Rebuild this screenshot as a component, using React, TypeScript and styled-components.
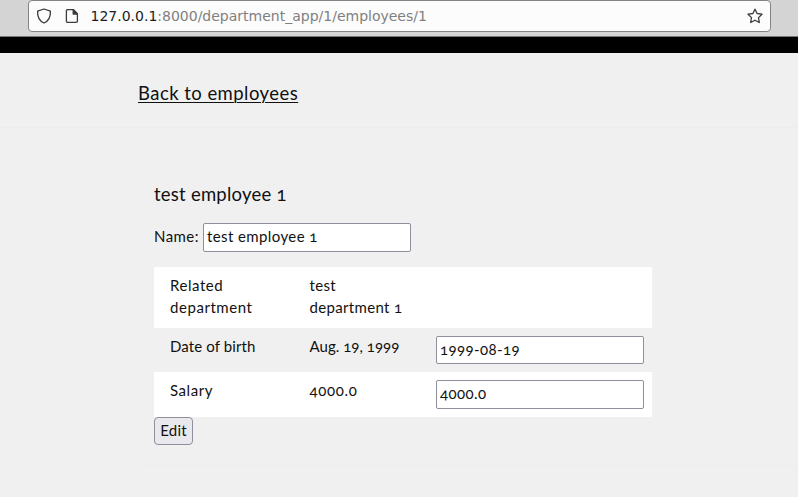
import React from "react";
import styled, { createGlobalStyle } from "styled-components";

const GlobalStyle = createGlobalStyle`
  * { box-sizing: border-box; }
  body {
    margin: 0;
    background: #f0f0f0;
    color: #111;
    font: 15px/22px Lato, "Open Sans", sans-serif;
    font-feature-settings: "onum" 1;
    overflow: hidden;
  }
`;

const Page = styled.div`
  height: 497px;
  overflow: hidden;
`;

const Toolbar = styled.header`
  height: 37px;
  background: #d4d4d4;
  border-bottom: 1px solid #777;
  padding: 0 27px 0 28px;
`;

const AddressBar = styled.div`
  height: 32px;
  display: flex;
  align-items: center;
  padding: 0 7px;
  background: #fcfcfc;
  border: 1px solid #838383;
  border-radius: 4px;
  font: 14px/20px "DejaVu Sans", sans-serif;
  color: #808080;
`;

const Icon = styled.svg<{ $gap?: number }>`
  width: 16px;
  height: 16px;
  flex: none;
  margin-right: ${(p) => p.$gap ?? 0}px;
  fill: none;
  stroke: #3c3c3c;
  stroke-width: 1.3;
  stroke-linejoin: round;
`;

const Url = styled.span`
  flex: 1;
  b { font-weight: 400; color: #1c1c1c; }
`;

const Banner = styled.div`
  height: 16px;
  background: #000;
`;

const Nav = styled.nav`
  height: 75px;
  padding: 27px 138px 0;
  border-bottom: 1px solid #ededed;
`;

const BackLink = styled.a`
  font-size: 18.5px;
  line-height: 26px;
  letter-spacing: 0.45px;
  color: #111;
  text-decoration: underline;
  text-decoration-thickness: 1px;
  text-underline-offset: 2px;
`;

const Section = styled.main`
  height: 338px;
  margin-left: 138px;
  padding: 52px 0 0 16px;
  border-bottom: 1px solid #ededed;
`;

const Title = styled.h1`
  margin: 0 0 15px;
  font-size: 18.5px;
  font-weight: 400;
  line-height: 28px;
  letter-spacing: 0.23px;
`;

const NameField = styled.label`
  display: grid;
  grid-template-columns: 49px 208px;
  height: 29px;
  margin-bottom: 15px;
  line-height: 27px;
  letter-spacing: 0.45px;
`;

const Input = styled.input<{ $height?: number }>`
  display: block;
  width: 208px;
  height: ${(p) => p.$height ?? 29}px;
  padding: 0 3px ${(p) => (p.$height ? 2 : 3)}px;
  border: 1px solid #8f8f9d;
  border-radius: 2px;
  background: #fff;
  color: #111;
  font: inherit;
  font-feature-settings: inherit;
  letter-spacing: 0.4px;
`;

const Details = styled.div`
  width: 498px;
`;

const Row = styled.div<{ $height: number; $shaded?: boolean }>`
  display: grid;
  grid-template-columns: 139.5px 126.5px 208px;
  height: ${(p) => p.$height}px;
  padding: 8px 8px 8px 16px;
  background: ${(p) => (p.$shaded ? "transparent" : "#fff")};
`;

const Cell = styled.div<{ $tracking: number }>`
  max-width: 100px;
  margin-top: -1px;
  letter-spacing: ${(p) => p.$tracking}px;
`;

const EditButton = styled.button`
  display: block;
  width: 39px;
  height: 28px;
  padding: 0 0 2px;
  border: 1px solid #8f8f9d;
  border-radius: 4px;
  background: #e9e9ed;
  color: #111;
  font: inherit;
  letter-spacing: 0.2px;
`;

export default function App() {
  return (
    <Page>
      <GlobalStyle />
      <Toolbar>
        <AddressBar>
          <Icon $gap={12} viewBox="0 0 16 16">
            <path d="M8 1 14.4 3.2C14.7 8.5 13 12.7 8 15 3 12.7 1.3 8.5 1.6 3.2Z" />
          </Icon>
          <Icon $gap={10.5} viewBox="0 0 16 16">
            <path d="M3.5 1.7H9.5L13.4 5.6V13.2Q13.4 14.3 12.3 14.3H3.5Q2.4 14.3 2.4 13.2V2.8Q2.4 1.7 3.5 1.7Z" />
            <path d="M9.2 1.7V6H13.4Z" fill="#3c3c3c" />
          </Icon>
          <Url><b>127.0.0.1</b>:8000/department_app/1/employees/1</Url>
          <Icon viewBox="0 0 16 16">
            <path d="M8 1.2 10.1 5.5 15 6.2 11.5 9.6 12.3 14.5 8 12.2 3.7 14.5 4.5 9.6 1 6.2 5.9 5.5Z" />
          </Icon>
        </AddressBar>
      </Toolbar>
      <Banner />
      <Nav><BackLink href="#">Back to employees</BackLink></Nav>
      <Section>
        <Title>test employee 1</Title>
        <NameField><span>Name:</span><Input defaultValue="test employee 1" /></NameField>
        <Details>
          <Row $height={61}>
            <Cell $tracking={0.55}>Related department</Cell>
            <Cell $tracking={0.33}>test department 1</Cell>
          </Row>
          <Row $height={44} $shaded>
            <Cell $tracking={0.12}>Date of birth</Cell>
            <Cell $tracking={0.04}>Aug. 19, 1999</Cell>
            <Input $height={28} defaultValue="1999-08-19" />
          </Row>
          <Row $height={45}>
            <Cell $tracking={0.55}>Salary</Cell>
            <Cell $tracking={0.65}>4000.0</Cell>
            <Input defaultValue="4000.0" />
          </Row>
        </Details>
        <EditButton>Edit</EditButton>
      </Section>
    </Page>
  );
}
